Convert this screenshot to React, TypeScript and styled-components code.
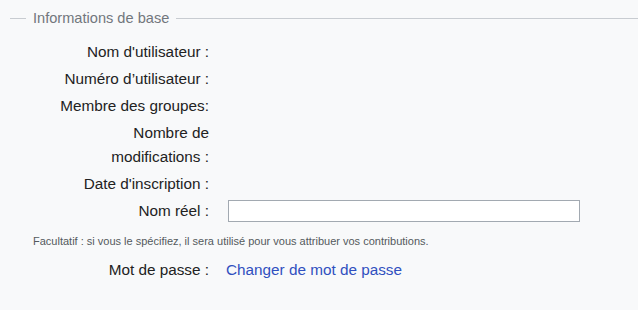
import styled, { createGlobalStyle } from 'styled-components';

const GlobalStyle = createGlobalStyle`
	html, body {
		margin: 0;
		background: #f8f9fa;
	}
	body {
		font-family: 'Liberation Sans', Arial, sans-serif;
		font-size: 15.3px;
		color: #222;
	}
`;

const labels = [
	"Nom d'utilisateur :",
	'Numéro d’utilisateur :',
	'Membre des groupes:',
	'Nombre de modifications :',
	"Date d'inscription :",
];

export default function App() {
	return (
		<>
			<GlobalStyle />
			<Page>
				<Legend>Informations de base</Legend>
				<Rows>
					{labels.map(label => (
						<Row key={label}>
							<Label>{label}</Label>
							<Value />
						</Row>
					))}
					<Row>
						<Label>Nom réel :</Label>
						<Value>
							<TextInput type='text' />
						</Value>
					</Row>
				</Rows>
				<Help>Facultatif : si vous le spécifiez, il sera utilisé pour vous attribuer vos contributions.</Help>
				<Row>
					<Label>Mot de passe :</Label>
					<Value>
						<Link href='#'>Changer de mot de passe</Link>
					</Value>
				</Row>
			</Page>
		</>
	);
}

const Page = styled.div`
	padding: 6px 0 0 10px;
	height: 304px;
`;

const Legend = styled.div`
	display: flex;
	align-items: center;
	font-size: 14.6px;
	line-height: 24px;
	color: #72777d;

	&::before,
	&::after {
		content: '';
		height: 1px;
		background: #c8ccd1;
	}
	&::before {
		width: 16px;
		margin-right: 7px;
	}
	&::after {
		flex: 1;
		margin-left: 7px;
	}
`;

const Rows = styled.div`
	display: flex;
	flex-direction: column;
	gap: 3px;
	margin-top: 10px;
`;

const Row = styled.div`
	display: grid;
	grid-template-columns: 158px 1fr;
	column-gap: 17px;
	padding-left: 41px;
	line-height: 24px;
	align-items: center;
`;

const Label = styled.div`
	text-align: right;
`;

const Value = styled.div`
	min-height: 24px;
	display: flex;
	align-items: center;
`;

const TextInput = styled.input`
	box-sizing: border-box;
	width: 352px;
	height: 22px;
	margin-left: 2px;
	border: 1px solid #a2a9b1;
	background: #fff;
	padding: 0 4px;
	font: inherit;
`;

const Help = styled.div`
	font-size: 11px;
	line-height: 16px;
	color: #54595d;
	padding: 10px 0 9px 23px;
`;

const Link = styled.a`
	color: #3050bf;
	text-decoration: none;
`;
